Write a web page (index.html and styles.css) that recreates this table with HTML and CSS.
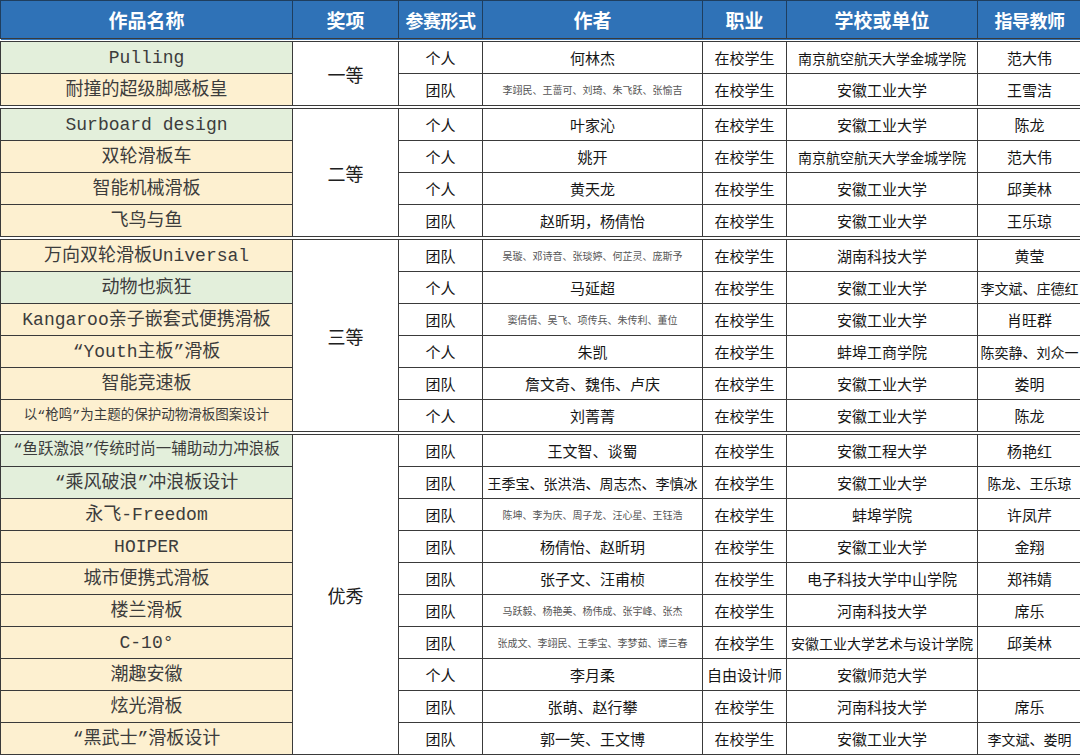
FILE: index.html
```html
<!DOCTYPE html>
<html lang="zh-CN">
<head>
<meta charset="utf-8">
<title>获奖作品名单</title>
<link rel="stylesheet" href="styles.css">
</head>
<body>
<table class="awards">
  <colgroup>
    <col class="c-name"><col class="c-award"><col class="c-form"><col class="c-author"><col class="c-job"><col class="c-school"><col class="c-teacher">
  </colgroup>
  <thead>
    <tr>
      <th>作品名称</th><th>奖项</th><th class="tight">参赛形式</th><th>作者</th><th>职业</th><th>学校或单位</th><th class="tight">指导教师</th>
    </tr>
  </thead>
  <tbody>
    <tr class="first">
      <td class="name green">Pulling</td><td class="award" rowspan="2">一等</td><td>个人</td><td>何林杰</td><td>在校学生</td><td class="sm">南京航空航天大学金城学院</td><td>范大伟</td>
    </tr>
    <tr>
      <td class="name yellow">耐撞的超级脚感板皇</td><td>团队</td><td class="xs">李翊民、王蔷可、刘琦、朱飞跃、张愉吉</td><td>在校学生</td><td>安徽工业大学</td><td>王雪洁</td>
    </tr>

    <tr class="first">
      <td class="name green">Surboard design</td><td class="award" rowspan="4">二等</td><td>个人</td><td>叶家沁</td><td>在校学生</td><td>安徽工业大学</td><td>陈龙</td>
    </tr>
    <tr>
      <td class="name yellow">双轮滑板车</td><td>个人</td><td>姚开</td><td>在校学生</td><td class="sm">南京航空航天大学金城学院</td><td>范大伟</td>
    </tr>
    <tr>
      <td class="name yellow">智能机械滑板</td><td>个人</td><td>黄天龙</td><td>在校学生</td><td>安徽工业大学</td><td>邱美林</td>
    </tr>
    <tr>
      <td class="name yellow">飞鸟与鱼</td><td>团队</td><td>赵昕玥，杨倩怡</td><td>在校学生</td><td>安徽工业大学</td><td>王乐琼</td>
    </tr>

    <tr class="first">
      <td class="name yellow">万向双轮滑板Universal</td><td class="award" rowspan="6">三等</td><td>团队</td><td class="xs">吴璇、邓诗音、张琰婷、何芷灵、庞斯予</td><td>在校学生</td><td>湖南科技大学</td><td>黄莹</td>
    </tr>
    <tr>
      <td class="name green">动物也疯狂</td><td>个人</td><td>马延超</td><td>在校学生</td><td>安徽工业大学</td><td class="sm">李文斌、庄德红</td>
    </tr>
    <tr>
      <td class="name yellow">Kangaroo亲子嵌套式便携滑板</td><td>团队</td><td class="xs">窦倩倩、吴飞、项传兵、朱传利、董位</td><td>在校学生</td><td>安徽工业大学</td><td>肖旺群</td>
    </tr>
    <tr>
      <td class="name yellow">“Youth主板”滑板</td><td>个人</td><td>朱凯</td><td>在校学生</td><td>蚌埠工商学院</td><td class="sm">陈奕静、刘众一</td>
    </tr>
    <tr>
      <td class="name yellow">智能竞速板</td><td>团队</td><td>詹文奇、魏伟、卢庆</td><td>在校学生</td><td>安徽工业大学</td><td>娄明</td>
    </tr>
    <tr>
      <td class="name yellow long">以“枪鸣”为主题的保护动物滑板图案设计</td><td>个人</td><td>刘菁菁</td><td>在校学生</td><td>安徽工业大学</td><td>陈龙</td>
    </tr>

    <tr class="first">
      <td class="name green mid">“鱼跃激浪”传统时尚一辅助动力冲浪板</td><td class="award" rowspan="10">优秀</td><td>团队</td><td>王文智、谈蜀</td><td>在校学生</td><td>安徽工程大学</td><td>杨艳红</td>
    </tr>
    <tr>
      <td class="name green">“乘风破浪”冲浪板设计</td><td>团队</td><td class="sm">王季宝、张洪浩、周志杰、李慎冰</td><td>在校学生</td><td>安徽工业大学</td><td class="sm">陈龙、王乐琼</td>
    </tr>
    <tr>
      <td class="name yellow">永飞-Freedom</td><td>团队</td><td class="xs">陈坤、李为庆、周子龙、汪心星、王钰浩</td><td>在校学生</td><td>蚌埠学院</td><td>许凤芹</td>
    </tr>
    <tr>
      <td class="name yellow">HOIPER</td><td>团队</td><td>杨倩怡、赵昕玥</td><td>在校学生</td><td>安徽工业大学</td><td>金翔</td>
    </tr>
    <tr>
      <td class="name yellow">城市便携式滑板</td><td>团队</td><td>张子文、汪甫桢</td><td>在校学生</td><td>电子科技大学中山学院</td><td>郑祎婧</td>
    </tr>
    <tr>
      <td class="name yellow">楼兰滑板</td><td>团队</td><td class="xs">马跃毅、杨艳美、杨伟成、张宇峰、张杰</td><td>在校学生</td><td>河南科技大学</td><td>席乐</td>
    </tr>
    <tr>
      <td class="name yellow">C-10°</td><td>团队</td><td class="xs">张成文、李翊民、王季宝、李梦茹、谭三春</td><td>在校学生</td><td class="sm">安徽工业大学艺术与设计学院</td><td>邱美林</td>
    </tr>
    <tr>
      <td class="name yellow">潮趣安徽</td><td>个人</td><td>李月柔</td><td>自由设计师</td><td>安徽师范大学</td><td></td>
    </tr>
    <tr>
      <td class="name yellow">炫光滑板</td><td>团队</td><td>张萌、赵行攀</td><td>在校学生</td><td>河南科技大学</td><td>席乐</td>
    </tr>
    <tr>
      <td class="name yellow">“黑武士”滑板设计</td><td>团队</td><td>郭一笑、王文博</td><td>在校学生</td><td>安徽工业大学</td><td class="sm">李文斌、娄明</td>
    </tr>
  </tbody>
</table>
</body>
</html>
```

FILE: styles.css
```css
html, body {
  margin: 0;
  padding: 0;
  background: #ffffff;
}

.awards {
  width: 1081px;
  table-layout: fixed;
  border-collapse: collapse;
  font-family: "Noto Sans CJK SC", "Noto Sans", sans-serif;
  color: #161616;
}

.c-name { width: 292px; }
.c-award { width: 106px; }
.c-form { width: 84px; }
.c-author { width: 220px; }
.c-job { width: 84px; }
.c-school { width: 191px; }
.c-teacher { width: 104px; }

.awards th {
  height: 37px;
  padding: 0;
  background: #2f72b7;
  color: #ffffff;
  font-size: 19px;
  font-weight: 700;
  border: 1px solid #1f3e5e;
  line-height: 1;
}

.awards th.tight {
  font-size: 18px;
  letter-spacing: -0.5px;
}

.awards td {
  height: 31px;
  padding: 0;
  border: 1px solid #3a3a3a;
  text-align: center;
  vertical-align: middle;
  white-space: nowrap;
  overflow: hidden;
  font-size: 15px;
  line-height: 1;
}

.awards tr.first td {
  border-top: 4px double #3a3a3a;
}

.awards td.name {
  font-size: 18px;
  color: #3c3c3c;
  font-family: "Liberation Mono", "Noto Sans CJK SC", monospace;
}

.awards td.name.mid { font-size: 15.5px; }
.awards td.name.long { font-size: 13.5px; }

.awards td.green { background: #e3efdb; }
.awards td.yellow { background: #fdf0d0; }

.awards td.award {
  background: #ffffff;
  font-size: 18px;
  color: #202020;
}

.awards td.sm { font-size: 14px; }
.awards td.xs { font-size: 10px; color: #555555; }
```
